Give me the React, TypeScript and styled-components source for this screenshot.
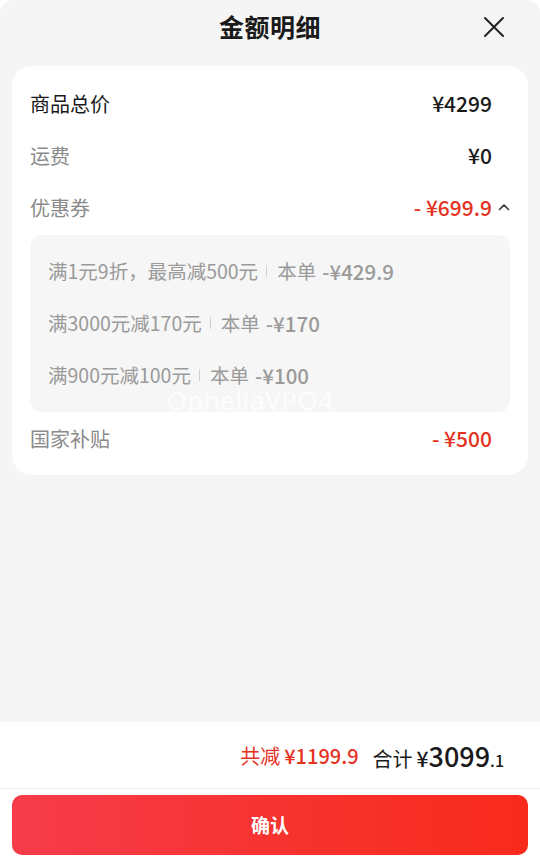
import React from 'react';
import styled, { createGlobalStyle } from 'styled-components';

const GlobalStyle = createGlobalStyle`
  html, body {
    margin: 0;
    padding: 0;
    background: #ffffff;
  }
  body {
    font-family: "Noto Sans CJK SC", "Noto Sans", sans-serif;
  }
`;

const colours = {
  bg: '#f5f5f5',
  text: '#1a1a1a',
  grey: '#8a8a8a',
  lightGrey: '#9a9a9a',
  red: '#e5321f',
};

const Sheet = styled.div`
  width: 540px;
  height: 868px;
  display: flex;
  flex-direction: column;
  background-color: ${colours.bg};
  border-radius: 14px 14px 0 0;
  overflow: hidden;
`;

const Header = styled.div`
  height: 52px;
  display: flex;
  align-items: center;
  justify-content: center;
  position: relative;
  flex-shrink: 0;
`;

const Title = styled.h1`
  margin: 0;
  font-size: 25px;
  font-weight: 700;
  color: ${colours.text};
  letter-spacing: 0.5px;
`;

const CloseButton = styled.button`
  position: absolute;
  right: 34px;
  top: 15px;
  width: 24px;
  height: 24px;
  padding: 0;
  border: none;
  background: none;
  display: flex;
  align-items: center;
  justify-content: center;
`;

const Main = styled.div`
  flex: 1;
  padding: 14px 12px 0;
`;

const Card = styled.div`
  position: relative;
  background: #ffffff;
  border-radius: 20px;
  padding: 11px 18px;
`;

const Row = styled.div`
  height: 52px;
  display: flex;
  align-items: center;
  justify-content: space-between;
`;

const Label = styled.span<{ $strong?: boolean }>`
  font-size: 20px;
  color: ${(p) => (p.$strong ? colours.text : colours.grey)};
`;

const ValueWrap = styled.div`
  display: flex;
  align-items: center;
`;

const Value = styled.span<{ $red?: boolean }>`
  font-size: 21px;
  font-weight: 500;
  color: ${(p) => (p.$red ? colours.red : colours.text)};
`;

const Trail = styled.span`
  width: 18px;
  display: flex;
  justify-content: flex-end;
  align-items: center;
`;

const Coupons = styled.div`
  margin-top: 2px;
  background: #f6f6f6;
  border-radius: 12px;
  padding: 10px 18px 11px;
`;

const CouponLine = styled.div`
  height: 52px;
  display: flex;
  align-items: center;
  font-size: 19.5px;
  line-height: 1.2;
  color: ${colours.lightGrey};
  white-space: nowrap;
`;

const Sep = styled.span`
  display: inline-block;
  width: 1px;
  height: 12px;
  background: #cfcfcf;
  margin: 0 10px 0 8px;
`;

const Amount = styled.span`
  font-size: 20.5px;
  font-weight: 500;
  margin-left: 6px;
`;

const Watermark = styled.div`
  position: absolute;
  left: 0;
  right: 0;
  top: 320px;
  text-align: center;
  padding-right: 40px;
  font-family: "Noto Sans", sans-serif;
  font-size: 26px;
  line-height: 1.1;
  color: rgba(255, 255, 255, 0.85);
  letter-spacing: 0.5px;
  pointer-events: none;
`;

const Footer = styled.div`
  background: #ffffff;
  flex-shrink: 0;
`;

const Summary = styled.div`
  height: 66px;
  display: flex;
  align-items: center;
  justify-content: flex-end;
  padding-right: 36px;
  border-bottom: 1px solid #f0f0f0;
`;

const Saved = styled.span`
  color: ${colours.red};
  font-size: 20px;
  margin-right: 14px;
`;

const SavedAmount = styled.span`
  font-weight: 500;
  margin-left: 4px;
`;

const Total = styled.span`
  display: flex;
  align-items: baseline;
  color: ${colours.text};
  font-size: 20px;
`;

const Yen = styled.span`
  font-size: 21px;
  font-weight: 500;
  margin-left: 4px;
`;

const Big = styled.span`
  font-size: 27px;
  font-weight: 500;
`;

const Small = styled.span`
  font-size: 16px;
  font-weight: 500;
`;

const ButtonArea = styled.div`
  padding: 6px 12px 13px;
`;

const Confirm = styled.button`
  width: 100%;
  height: 60px;
  border: none;
  border-radius: 10px;
  background: linear-gradient(90deg, #f63b4b 0%, #f7322c 60%, #f82a1b 100%);
  color: #ffffff;
  font-family: inherit;
  font-size: 19px;
  font-weight: 700;
  padding-bottom: 3px;
`;

const coupons = [
  { rule: '满1元9折，最高减500元', amount: '-¥429.9' },
  { rule: '满3000元减170元', amount: '-¥170' },
  { rule: '满900元减100元', amount: '-¥100' },
];

function App() {
  return (
    <>
      <GlobalStyle />
      <Sheet>
        <Header>
          <Title>金额明细</Title>
          <CloseButton aria-label="关闭">
            <svg width="22" height="22" viewBox="0 0 22 22" fill="none">
              <path d="M2 2L20 20M20 2L2 20" stroke="#222" strokeWidth="2" strokeLinecap="round" />
            </svg>
          </CloseButton>
        </Header>
        <Main>
          <Card>
            <Row>
              <Label $strong>商品总价</Label>
              <ValueWrap>
                <Value>¥4299</Value>
                <Trail />
              </ValueWrap>
            </Row>
            <Row>
              <Label>运费</Label>
              <ValueWrap>
                <Value>¥0</Value>
                <Trail />
              </ValueWrap>
            </Row>
            <Row>
              <Label>优惠券</Label>
              <ValueWrap>
                <Value $red>- ¥699.9</Value>
                <Trail>
                  <svg width="12" height="8" viewBox="0 0 12 8" fill="none">
                    <path d="M1.5 6.5L6 2L10.5 6.5" stroke="#333" strokeWidth="1.6" strokeLinecap="round" strokeLinejoin="round" />
                  </svg>
                </Trail>
              </ValueWrap>
            </Row>
            <Coupons>
              {coupons.map((c) => (
                <CouponLine key={c.rule}>
                  {c.rule}
                  <Sep />
                  本单<Amount>{c.amount}</Amount>
                </CouponLine>
              ))}
            </Coupons>
            <Row>
              <Label>国家补贴</Label>
              <ValueWrap>
                <Value $red>- ¥500</Value>
                <Trail />
              </ValueWrap>
            </Row>
            <Watermark>OpheliaVPQ4</Watermark>
          </Card>
        </Main>
        <Footer>
          <Summary>
            <Saved>
              共减<SavedAmount>¥1199.9</SavedAmount>
            </Saved>
            <Total>
              合计<Yen>¥</Yen>
              <Big>3099</Big>
              <Small>.1</Small>
            </Total>
          </Summary>
          <ButtonArea>
            <Confirm>确认</Confirm>
          </ButtonArea>
        </Footer>
      </Sheet>
    </>
  );
}

export default App;
